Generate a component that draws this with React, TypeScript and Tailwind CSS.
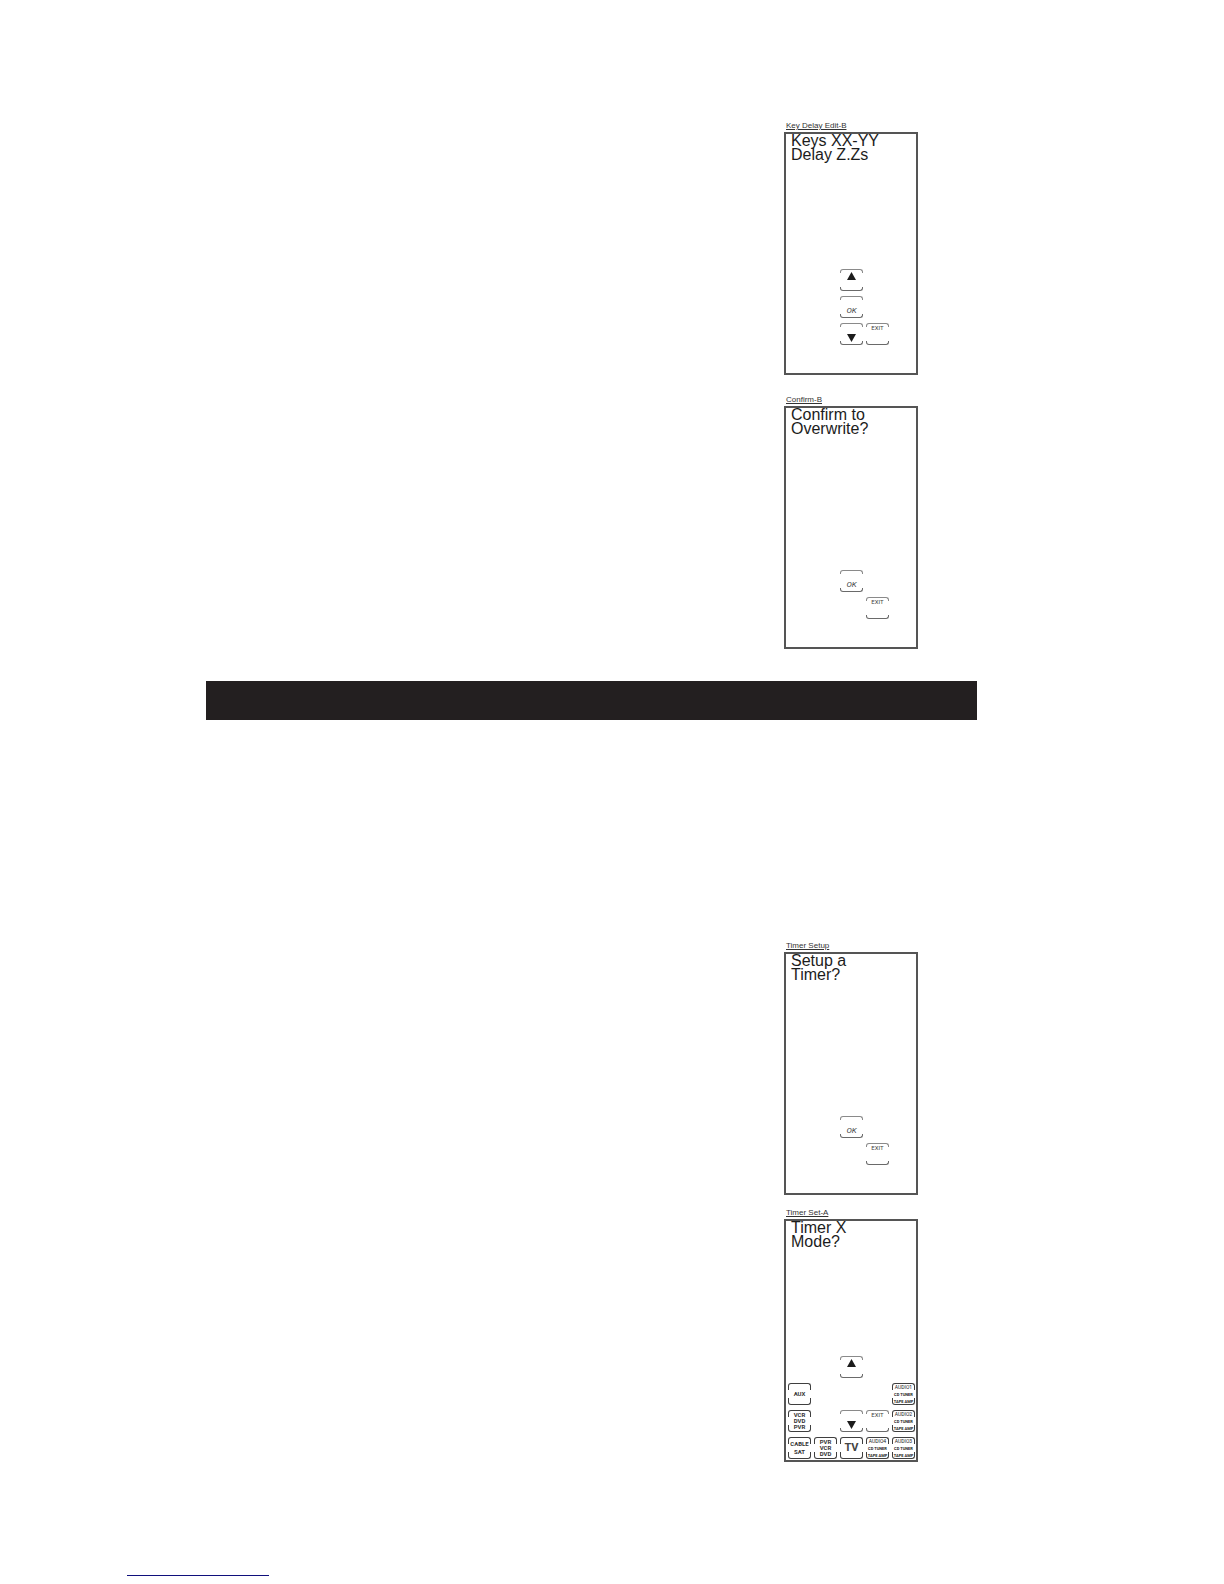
import clsx from 'clsx'

type KeyKind = 'up' | 'down' | 'ok' | 'exit' | 'mode' | 'tv' | 'audio'

interface RemoteKey {
    kind: KeyKind
    lines: string[]
    place: string
}

interface Screen {
    name: string
    message: string[]
    keys: RemoteKey[]
}

const delayScreens: Screen[] = [
    {
        name: 'Key Delay Edit-B',
        message: ['Keys XX-YY', 'Delay Z.Zs'],
        keys: [
            { kind: 'up', lines: [], place: 'col-start-3 row-start-1' },
            { kind: 'ok', lines: ['OK'], place: 'col-start-3 row-start-2' },
            { kind: 'down', lines: [], place: 'col-start-3 row-start-3' },
            { kind: 'exit', lines: ['EXIT'], place: 'col-start-4 row-start-3' }
        ]
    },
    {
        name: 'Confirm-B',
        message: ['Confirm to', 'Overwrite?'],
        keys: [
            { kind: 'ok', lines: ['OK'], place: 'col-start-3 row-start-2' },
            { kind: 'exit', lines: ['EXIT'], place: 'col-start-4 row-start-3' }
        ]
    }
]

const timerScreens: Screen[] = [
    {
        name: 'Timer Setup',
        message: ['Setup a', 'Timer?'],
        keys: [
            { kind: 'ok', lines: ['OK'], place: 'col-start-3 row-start-2' },
            { kind: 'exit', lines: ['EXIT'], place: 'col-start-4 row-start-3' }
        ]
    },
    {
        name: 'Timer Set-A',
        message: ['Timer X', 'Mode?'],
        keys: [
            { kind: 'up', lines: [], place: 'col-start-3 row-start-1' },
            { kind: 'mode', lines: ['AUX'], place: 'col-start-1 row-start-2' },
            { kind: 'audio', lines: ['AUDIO1', 'CD TUNER', 'TAPE AMP'], place: 'col-start-5 row-start-2' },
            { kind: 'mode', lines: ['VCR', 'DVD', 'PVR'], place: 'col-start-1 row-start-3' },
            { kind: 'down', lines: [], place: 'col-start-3 row-start-3' },
            { kind: 'exit', lines: ['EXIT'], place: 'col-start-4 row-start-3' },
            { kind: 'audio', lines: ['AUDIO2', 'CD TUNER', 'TAPE AMP'], place: 'col-start-5 row-start-3' },
            { kind: 'mode', lines: ['CABLE', 'SAT'], place: 'col-start-1 row-start-4' },
            { kind: 'mode', lines: ['PVR', 'VCR', 'DVD'], place: 'col-start-2 row-start-4' },
            { kind: 'tv', lines: ['TV'], place: 'col-start-3 row-start-4' },
            { kind: 'audio', lines: ['AUDIO4', 'CD TUNER', 'TAPE AMP'], place: 'col-start-4 row-start-4' },
            { kind: 'audio', lines: ['AUDIO3', 'CD TUNER', 'TAPE AMP'], place: 'col-start-5 row-start-4' }
        ]
    }
]

function Arrow({ down }: { down?: boolean }) {
    return (
        <svg viewBox="0 0 9 8" className="h-2 w-[9px]" fill="#1c1c1c" aria-hidden="true">
            <path d={down ? 'M0 0H9L4.5 8Z' : 'M0 8H9L4.5 0Z'} />
        </svg>
    )
}

function Key({ item }: { item: RemoteKey }) {
    const { kind, lines, place } = item
    const dark = kind === 'mode' || kind === 'tv' || kind === 'audio'

    return (
        <button
            type="button"
            aria-label={kind === 'up' ? 'Up' : kind === 'down' ? 'Down' : undefined}
            className={clsx(
                'relative flex h-[22px] flex-col items-center whitespace-nowrap font-[Roboto,"Liberation_Sans",sans-serif]',
                // the outline is two brackets, open half way down each side
                'before:absolute before:inset-x-0 before:top-0 before:rounded-t-[3px] before:border before:border-b-0',
                'after:absolute after:inset-x-0 after:bottom-0 after:rounded-b-[3px] after:border after:border-t-0',
                dark
                    ? 'before:h-[7px] before:border-[#3f3f3f] after:h-[7px] after:border-[#3f3f3f]'
                    : 'before:h-1 before:border-[#8a8a8a] after:h-1 after:border-[#6a6a6a]',
                kind === 'up' && 'justify-start pt-[3px]',
                kind === 'down' && 'justify-end pb-[3px]',
                kind === 'ok' && 'justify-end pb-[3px] text-[8px] leading-[8px] text-[#444] italic',
                kind === 'exit' && 'justify-start pt-px text-[6px] leading-[7px] text-[#444]',
                kind === 'mode' && 'justify-center text-[6px] font-bold text-[#333]',
                kind === 'mode' && (lines.length === 3 ? 'leading-[6px]' : 'leading-[8px]'),
                kind === 'tv' && 'justify-center text-[11px] leading-[12px] font-bold text-[#444]',
                kind === 'audio' && 'justify-center text-[4px] leading-[7px] font-bold text-[#222]',
                place
            )}
        >
            {kind === 'up' && <Arrow />}
            {kind === 'down' && <Arrow down />}
            {lines.map((line, idx) => (
                <span key={line} className={clsx(kind === 'audio' && idx === 0 && 'text-[5px] font-normal')}>
                    {line}
                </span>
            ))}
        </button>
    )
}

function ScreenFigure({ screen }: { screen: Screen }) {
    return (
        <figure className="w-[134px]">
            <figcaption className="pl-[2px] text-[8px] leading-[12px] text-[#333] underline underline-offset-1">
                {screen.name}
            </figcaption>
            <div className="flex h-[243px] flex-col justify-between border-2 border-[#555] pr-px pb-px pl-[2px]">
                <p className="pl-[3px] text-[16px] leading-[14px] whitespace-nowrap text-[#1c1c1c]">
                    {screen.message.map((line) => (
                        <span key={line} className="block">{line}</span>
                    ))}
                </p>
                <div className="grid grid-cols-[repeat(5,23px)] grid-rows-[repeat(4,22px)] gap-x-[3px] gap-y-[5px]">
                    {screen.keys.map((item) => (
                        <Key key={item.place} item={item} />
                    ))}
                </div>
            </div>
        </figure>
    )
}

export default function App() {
    return (
        <div className='min-h-screen bg-white pt-[120px] pb-2 font-["Liberation_Sans",Arial,sans-serif]'>
            <main className="pr-[247px] pl-[206px]">
                <section className="flex flex-col items-end gap-[19px] pr-[59px]">
                    {delayScreens.map((screen) => (
                        <ScreenFigure key={screen.name} screen={screen} />
                    ))}
                </section>

                {/* Section bar */}
                <div className="mt-8 h-[39px] bg-[#231f20]" />

                <section className="mt-[220px] flex flex-col items-end gap-3 pr-[59px]">
                    {timerScreens.map((screen) => (
                        <ScreenFigure key={screen.name} screen={screen} />
                    ))}
                </section>
            </main>

            <footer className="mt-[113px] pl-[127px]">
                <hr className="h-px w-[142px] border-0 bg-[#10107c]" />
            </footer>
        </div>
    )
}
